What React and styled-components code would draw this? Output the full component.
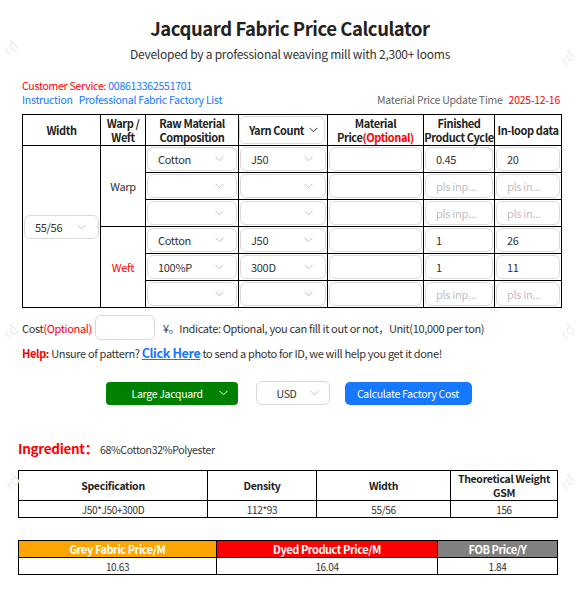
import React from 'react';
import styled, { createGlobalStyle } from 'styled-components';

const GlobalStyle = createGlobalStyle`
  body {
    margin: 0;
    background: #fff;
    font-family: "Noto Sans CJK SC", "Noto Sans", sans-serif;
    color: #333;
  }
`;

const rows = [
  { mat: 'Cotton', yarn: 'J50', fin: '0.45', loop: '20' },
  { mat: '', yarn: '', fin: '', loop: '' },
  { mat: '', yarn: '', fin: '', loop: '' },
  { mat: 'Cotton', yarn: 'J50', fin: '1', loop: '26' },
  { mat: '100%P', yarn: '300D', fin: '1', loop: '11' },
  { mat: '', yarn: '', fin: '', loop: '' },
];

const marks = [
  { top: 40, left: 3 },
  { top: 50, left: 560 },
  { top: 324, left: 3 },
  { top: 324, left: 560 },
  { top: 474, left: 5 },
  { top: 474, left: 560 },
];

function Chevron({ color = '#bfbfbf' }) {
  return (
    <svg width="9" height="6" viewBox="0 0 9 6">
      <polyline points="0.5,0.8 4.5,4.8 8.5,0.8" fill="none" stroke={color} strokeWidth="1" />
    </svg>
  );
}

function Select({ value }) {
  return (
    <SelectBox>
      <span>{value}</span>
      <Chevron />
    </SelectBox>
  );
}

function Home() {
  return (
    <Page>
      <GlobalStyle />
      {marks.map((m, i) => (
        <Watermark key={i} style={{ top: m.top, left: m.left }}>rd</Watermark>
      ))}
      <Title>Jacquard Fabric Price Calculator</Title>
      <Subtitle>Developed by a professional weaving mill with 2,300+ looms</Subtitle>

      <InfoBar>
        <div>
          <InfoLine>
            <Red>Customer Service: </Red>
            <Blue>008613362551701</Blue>
          </InfoLine>
          <InfoLine>
            <Blue>Instruction</Blue>
            <Blue $gap>Professional Fabric Factory List</Blue>
          </InfoLine>
        </div>
        <InfoLine>
          <Gray>Material Price Update Time</Gray>
          <Red $gap>2025-12-16</Red>
        </InfoLine>
      </InfoBar>

      <CalcTable>
        <colgroup>
          <col style={{ width: 78 }} />
          <col style={{ width: 45 }} />
          <col style={{ width: 93 }} />
          <col style={{ width: 89 }} />
          <col style={{ width: 96 }} />
          <col style={{ width: 71 }} />
          <col style={{ width: 67 }} />
        </colgroup>
        <thead>
          <tr>
            <Th>Width</Th>
            <Th>Warp /<br />Weft</Th>
            <Th>Raw Material<br />Composition</Th>
            <Th $tight>
              <HeadSelect>
                <span>Yarn Count</span>
                <Chevron color="#333" />
              </HeadSelect>
            </Th>
            <Th>Material<br />Price<Red>(Optional)</Red></Th>
            <Th>Finished<br />Product Cycle</Th>
            <Th>In-loop data</Th>
          </tr>
        </thead>
        <tbody>
          {rows.map((r, i) => (
            <tr key={i}>
              {i === 0 && (
                <WidthCell rowSpan={6}>
                  <Select value="55/56" />
                </WidthCell>
              )}
              {i === 0 && <SideCell rowSpan={3}>Warp</SideCell>}
              {i === 3 && <SideCell rowSpan={3} $red>Weft</SideCell>}
              <Td><Select value={r.mat} /></Td>
              <Td><Select value={r.yarn} /></Td>
              <Td><InputBox /></Td>
              <Td><InputBox $empty={!r.fin}>{r.fin || 'pls inp...'}</InputBox></Td>
              <Td><InputBox $empty={!r.loop}>{r.loop || 'pls in...'}</InputBox></Td>
            </tr>
          ))}
        </tbody>
      </CalcTable>

      <CostRow>
        <span>Cost<Red>(Optional)</Red></span>
        <CostInput />
        <span>¥。Indicate: Optional, you can fill it out or not，Unit(10,000 per ton)</span>
      </CostRow>

      <HelpRow>
        <HelpLabel>Help:</HelpLabel> Unsure of pattern? <ClickHere>Click Here</ClickHere> to send a photo for ID, we will help you get it done!
      </HelpRow>

      <Actions>
        <TypeSelect>
          <span>Large Jacquard</span>
          <Chevron color="#fff" />
        </TypeSelect>
        <CurrencySelect>
          <span>USD</span>
          <Chevron />
        </CurrencySelect>
        <CalcButton>Calculate Factory Cost</CalcButton>
      </Actions>

      <Ingredient>
        <IngredientLabel>Ingredient：</IngredientLabel>
        <span>68%Cotton32%Polyester</span>
      </Ingredient>

      <ResultTable>
        <colgroup>
          <col style={{ width: 189 }} />
          <col style={{ width: 109 }} />
          <col style={{ width: 134 }} />
          <col style={{ width: 107 }} />
        </colgroup>
        <thead>
          <tr>
            <ResultTh>Specification</ResultTh>
            <ResultTh>Density</ResultTh>
            <ResultTh>Width</ResultTh>
            <ResultTh>Theoretical Weight<br />GSM</ResultTh>
          </tr>
        </thead>
        <tbody>
          <tr>
            <ResultTd>J50*J50+300D</ResultTd>
            <ResultTd>112*93</ResultTd>
            <ResultTd>55/56</ResultTd>
            <ResultTd>156</ResultTd>
          </tr>
        </tbody>
      </ResultTable>

      <PriceTable>
        <colgroup>
          <col style={{ width: 198 }} />
          <col style={{ width: 221 }} />
          <col style={{ width: 120 }} />
        </colgroup>
        <thead>
          <tr>
            <PriceTh $bg="#ffa500">Grey Fabric Price/M</PriceTh>
            <PriceTh $bg="#ff0000">Dyed Product Price/M</PriceTh>
            <PriceTh $bg="#808080">FOB Price/Y</PriceTh>
          </tr>
        </thead>
        <tbody>
          <tr>
            <ResultTd>10.63</ResultTd>
            <ResultTd>16.04</ResultTd>
            <ResultTd>1.84</ResultTd>
          </tr>
        </tbody>
      </PriceTable>
    </Page>
  );
}

export default Home;

const Page = styled.div`
  position: relative;
  width: 580px;
  height: 589px;
  overflow: hidden;
  padding-top: 16px;
  box-sizing: border-box;
`;

const Watermark = styled.span`
  position: absolute;
  font-size: 14px;
  line-height: 14px;
  color: #eeeeee;
  transform: rotate(-45deg);
  pointer-events: none;
`;

const Title = styled.h1`
  margin: 0;
  text-align: center;
  font-size: 18.5px;
  letter-spacing: -0.45px;
  line-height: 24px;
  font-weight: 700;
  color: #222;
`;

const Subtitle = styled.p`
  margin: 6px 0 0;
  text-align: center;
  font-size: 12px;
  letter-spacing: -0.25px;
  line-height: 16px;
  color: #333;
`;

const InfoBar = styled.div`
  display: flex;
  justify-content: space-between;
  align-items: flex-end;
  margin: 17px 20px 0 22px;
`;

const InfoLine = styled.div`
  font-size: 10.5px;
  letter-spacing: -0.25px;
  line-height: 14px;
`;

const Red = styled.span`
  color: #ff0000;
  margin-left: ${(p) => (p.$gap ? '6px' : '0')};
`;

const Blue = styled.span`
  color: #1677ff;
  margin-left: ${(p) => (p.$gap ? '6px' : '0')};
`;

const Gray = styled.span`
  color: #666;
`;

const CalcTable = styled.table`
  margin: 7px 0 0 22px;
  width: 540px;
  border-collapse: collapse;
  table-layout: fixed;
`;

const Th = styled.th`
  border: 1px solid #000;
  height: 28px;
  padding: ${(p) => (p.$tight ? '1px 2px 1px 0' : '0')};
  font-size: 11px;
  letter-spacing: -0.4px;
  line-height: 14px;
  font-weight: 700;
  color: #222;
  text-align: center;
  vertical-align: middle;
`;

const HeadSelect = styled.div`
  display: flex;
  align-items: center;
  justify-content: space-between;
  height: 28px;
  padding: 0 6px 0 9px;
  border: 1px solid #d9d9d9;
  border-radius: 6px;
  box-sizing: border-box;
`;

const Td = styled.td`
  border: 1px solid #000;
  padding: 1px;
`;

const WidthCell = styled(Td)`
  padding: 0 1px;
  vertical-align: middle;
`;

const SideCell = styled.td`
  border: 1px solid #000;
  text-align: center;
  font-size: 11px;
  letter-spacing: -0.3px;
  color: ${(p) => (p.$red ? '#ff0000' : '#333')};
`;

const SelectBox = styled.div`
  display: flex;
  align-items: center;
  justify-content: space-between;
  height: 24px;
  padding: 0 12px 0 10px;
  border: 1px solid #d9d9d9;
  border-radius: 6px;
  box-sizing: border-box;
  font-size: 11px;
  letter-spacing: -0.3px;
  color: #333;
`;

const InputBox = styled.div`
  display: flex;
  align-items: center;
  height: 24px;
  padding: 0 10px;
  border: 1px solid #d9d9d9;
  border-radius: 6px;
  box-sizing: border-box;
  font-size: 11px;
  letter-spacing: -0.3px;
  color: ${(p) => (p.$empty ? '#bfbfbf' : '#333')};
  white-space: nowrap;
  overflow: hidden;
`;

const CostRow = styled.div`
  display: flex;
  align-items: center;
  margin: 7px 0 0 22px;
  font-size: 11px;
  letter-spacing: -0.35px;
  color: #333;
`;

const CostInput = styled.div`
  width: 60px;
  height: 25px;
  margin: 0 8px 0 3px;
  border: 1px solid #d9d9d9;
  border-radius: 6px;
  box-sizing: border-box;
`;

const HelpRow = styled.div`
  margin: 4px 0 0 22px;
  font-size: 11px;
  letter-spacing: -0.35px;
  line-height: 18px;
  color: #333;
`;

const HelpLabel = styled.b`
  color: #ff0000;
`;

const ClickHere = styled.a`
  color: #1677ff;
  font-weight: 700;
  font-size: 12.5px;
  text-decoration: underline;
`;

const Actions = styled.div`
  display: flex;
  justify-content: center;
  align-items: center;
  margin-top: 19px;
  padding-right: 3px;
`;

const TypeSelect = styled.div`
  display: flex;
  align-items: center;
  justify-content: space-between;
  width: 132px;
  height: 23px;
  padding: 0 10px 0 26px;
  box-sizing: border-box;
  background: #008000;
  border-radius: 4px;
  color: #fff;
  font-size: 10.5px;
  letter-spacing: -0.3px;
`;

const CurrencySelect = styled.div`
  display: flex;
  align-items: center;
  justify-content: space-between;
  width: 74px;
  height: 24px;
  margin-left: 18px;
  padding: 0 10px 0 20px;
  box-sizing: border-box;
  border: 1px solid #d9d9d9;
  border-radius: 6px;
  font-size: 10.5px;
  letter-spacing: -0.3px;
  color: #333;
`;

const CalcButton = styled.button`
  margin-left: 15px;
  width: 127px;
  height: 23px;
  padding: 0;
  border: none;
  border-radius: 5px;
  background: #1677ff;
  color: #fff;
  font-family: inherit;
  font-size: 10.5px;
  letter-spacing: -0.3px;
`;

const Ingredient = styled.div`
  display: flex;
  align-items: baseline;
  margin: 33px 0 0 18px;
  line-height: 20px;
  font-size: 10.5px;
  letter-spacing: -0.3px;
  color: #333;
`;

const IngredientLabel = styled.span`
  color: #ff0000;
  font-weight: 700;
  font-size: 13.5px;
  margin-right: 2px;
`;

const ResultTable = styled.table`
  margin: 10px 0 0 18px;
  width: 540px;
  border-collapse: collapse;
  table-layout: fixed;
`;

const ResultTh = styled.th`
  border: 1px solid #000;
  height: 29px;
  padding: 0;
  font-size: 10.5px;
  letter-spacing: -0.3px;
  line-height: 14px;
  font-weight: 700;
  color: #222;
  text-align: center;
`;

const ResultTd = styled.td`
  border: 1px solid #000;
  height: 16px;
  padding: 0;
  font-size: 10px;
  letter-spacing: -0.35px;
  line-height: 13px;
  text-align: center;
  color: #333;
`;

const PriceTable = styled(ResultTable)`
  margin-top: 22px;
`;

const PriceTh = styled.th`
  border: 1px solid #000;
  height: 16px;
  padding: 0;
  background: ${(p) => p.$bg};
  color: #fff;
  font-size: 11px;
  letter-spacing: -0.45px;
  line-height: 13px;
  font-weight: 700;
  text-align: center;
`;
